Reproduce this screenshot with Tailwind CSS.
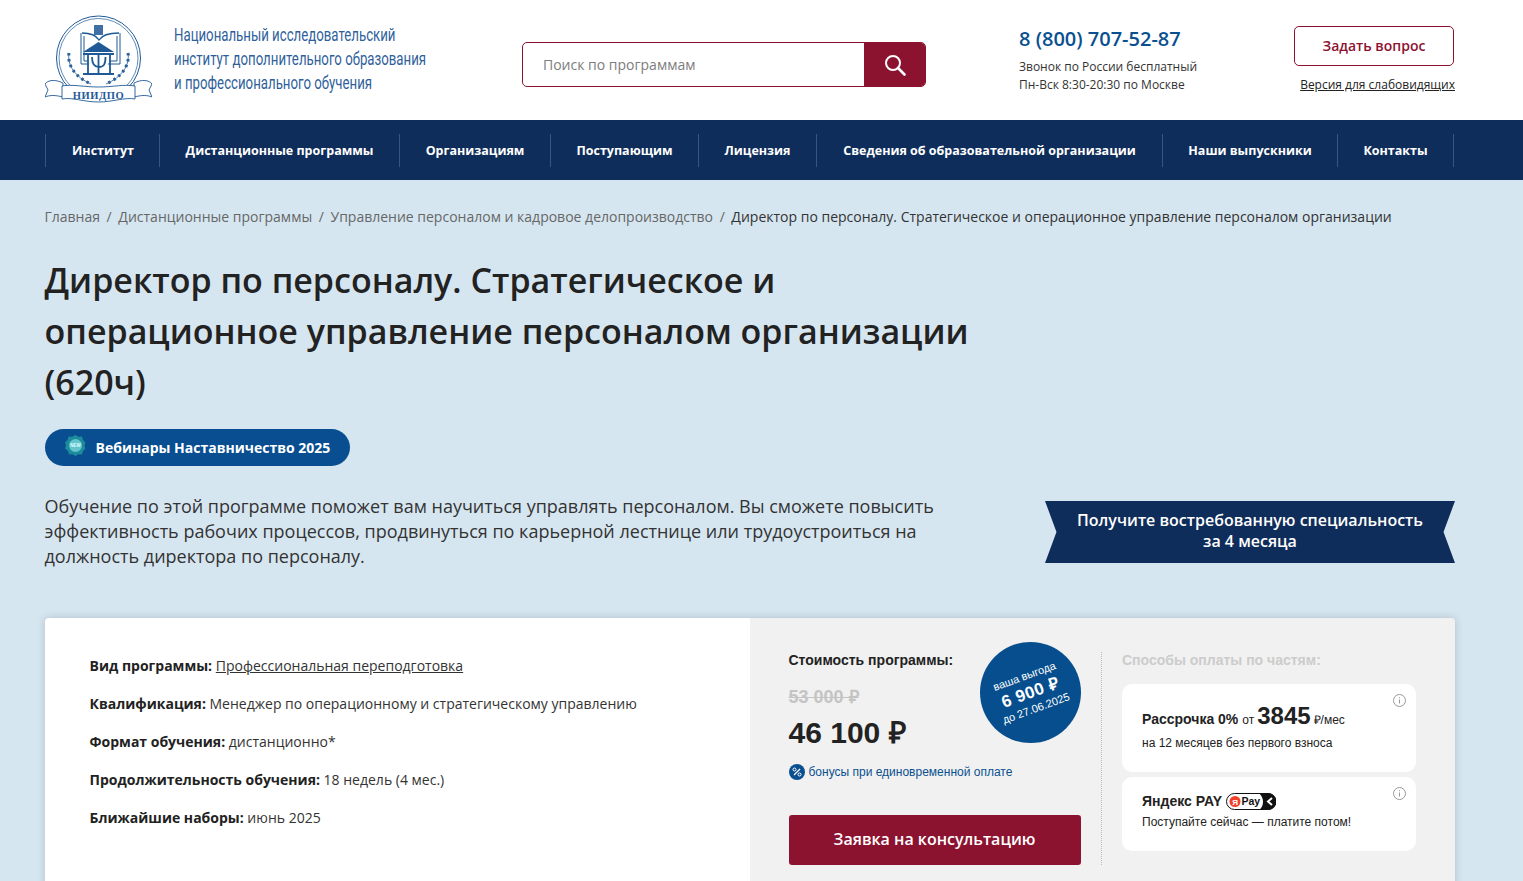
<!DOCTYPE html>
<html>
<head>
    <meta charset="utf-8">
    <title>НИИДПО</title>
    <script src="https://cdn.jsdelivr.net/npm/@tailwindcss/browser@4"></script>
</head>
<body class="bg-[#d6e6f1] text-[#222222] font-['Open_Sans',sans-serif] h-[881px] overflow-hidden">

    <!-- Header -->
    <header class="bg-white h-[120px] pl-[45px] flex items-start">
        <svg class="w-[107px] h-[90px] mt-[13px] shrink-0" viewBox="0 0 107 90" fill="none" stroke="#1f5a96">
            <circle cx="53.500" cy="45" r="42" stroke-width="1"/>
            <circle cx="53.500" cy="45" r="39.500" stroke-width="0.700"/>
            <!-- emblem, book, temple -->
            <rect x="49" y="12" width="9" height="10" fill="#3f6fa5" stroke="none"/>
            <path d="M36 20v31h8M75 20v31H63M39 23v25h4M72 23v25h-8" stroke-width="1"/>
            <path d="M37 20c8 0 14 2 17 7 3-5 10-7 20-7" stroke-width="1.400"/>
            <path d="M53.500 29 38 39h31z" fill="#1f5a96" stroke="none"/>
            <path d="M38 41h31M38 61h31" stroke-width="1.800"/>
            <path d="M43 41v20M65 41v20" stroke-width="1.800"/>
            <path d="M47 44c0 7 2 10 7 10s6.500-3 6.500-10M53.500 41v20" stroke-width="1.800"/>
            <!-- laurels -->
            <path d="M24 40c-2 12 6 24 22 31M83 40c2 12-6 24-22 31" stroke-width="0.800"/>
            <path d="M24 40c-2 12 6 24 22 31M83 40c2 12-6 24-22 31" stroke-width="3" stroke-dasharray="2.500 3.500" stroke="#2b6199"/>
            <!-- ribbon -->
            <path d="M18 70C10 66 3 67 0 71l3 6-3 7c5-2 10-2 18 0zM89 70c8-4 15-3 18 1l-3 6 3 7c-5-2-10-2-18 0z" fill="#fff" stroke-width="0.900"/>
            <path d="M17 73c10-2 22 1 36.500 1s26-3 36.500-1v13c-10-2-22 3-36.500 3S27 84 17 86z" fill="#fff" stroke-width="0.900"/>
            <text x="53.500" y="86" text-anchor="middle" fill="#1f5a96" stroke="none" font-family="Liberation Serif" font-size="10.500" font-weight="700" letter-spacing="0.600">НИИДПО</text>
        </svg>
        <div class="ml-[22px] mt-[23px] w-[320px] text-[18.500px] leading-[24px] text-[#2f5f9b] font-['Roboto',sans-serif] scale-x-[0.715] origin-left whitespace-nowrap">
            Национальный исследовательский<br>институт дополнительного образования<br>и профессионального обучения
        </div>
        <div class="ml-[28px] mt-[42px] w-[404px] h-[45px] flex border border-[#8c1330] rounded-[5px] overflow-hidden shrink-0">
            <div class="flex-1 pl-[20px] text-[14px] leading-[44px] text-[#7d7d7d]">Поиск по программам</div>
            <div class="w-[61px] bg-[#8c1330] flex items-center justify-center">
                <svg class="w-[22px] h-[22px]" viewBox="0 0 22 22" fill="none" stroke="#fff" stroke-width="2"><circle cx="9" cy="9" r="7"/><path d="m14 14 6.500 6.500" stroke-width="2.600" stroke-linecap="round"/></svg>
            </div>
        </div>
        <div class="ml-[93px] mt-[25px] w-[275px] shrink-0">
            <div class="text-[20px] leading-[28px] font-semibold text-[#0a5090]">8 (800) 707-52-87</div>
            <div class="mt-[5px] text-[12px] leading-[18px] text-[#333333]">Звонок по России бесплатный<br>Пн-Вск 8:30-20:30 по Москве</div>
        </div>
        <div class="mt-[26px] w-[160px] shrink-0">
            <div class="h-[40px] border border-[#8c1330] rounded-[5px] text-[14px] font-semibold leading-[38px] text-center text-[#8c1330]">Задать вопрос</div>
            <div class="mt-[10px] -mr-[1px] text-[12px] leading-[18px] text-right underline whitespace-nowrap">Версия для слабовидящих</div>
        </div>
    </header>

    <!-- Nav -->
    <nav class="bg-[#0f2d5a] h-[60px] pl-[45px] flex items-center text-white text-[12.500px] font-bold">
        <div class="w-[115px] h-[33px] flex items-center justify-center pt-[2px] pl-[1px] border-x border-[#3a5680]">Институт</div>
        <div class="w-[240px] h-[33px] flex items-center justify-center pt-[2px] border-r border-[#3a5680]">Дистанционные программы</div>
        <div class="w-[151px] h-[33px] flex items-center justify-center pt-[2px] border-r border-[#3a5680]">Организациям</div>
        <div class="w-[148px] h-[33px] flex items-center justify-center pt-[2px] border-r border-[#3a5680]">Поступающим</div>
        <div class="w-[118px] h-[33px] flex items-center justify-center pt-[2px] border-r border-[#3a5680]">Лицензия</div>
        <div class="w-[346px] h-[33px] flex items-center justify-center pt-[2px] border-r border-[#3a5680]">Сведения об образовательной организации</div>
        <div class="w-[175px] h-[33px] flex items-center justify-center pt-[2px] border-r border-[#3a5680]">Наши выпускники</div>
        <div class="w-[116px] h-[33px] flex items-center justify-center pt-[2px] border-r border-[#3a5680]">Контакты</div>
    </nav>

    <!-- Content -->
    <main class="pl-[44.500px] w-[1455px]">
        <div class="pt-[27px] text-[14px] leading-[20px] text-[#666666] whitespace-nowrap">
            Главная<span class="mx-[6.600px]">/</span>Дистанционные программы<span class="mx-[6.600px]">/</span>Управление персоналом и кадровое делопроизводство<span class="mx-[6.600px]">/</span><span class="text-[#333333]">Директор по персоналу. Стратегическое и операционное управление персоналом организации</span>
        </div>

        <h1 class="mt-[28px] w-[960px] text-[34px] leading-[51px] font-semibold text-[#222222]">Директор по персоналу. Стратегическое и операционное управление персоналом организации (620ч)</h1>

        <div class="mt-[21px] w-[305px] h-[37px] rounded-full bg-[#084e91] flex items-center pl-[20px] text-white text-[14px] font-bold">
            <svg class="w-[21px] h-[21px] -mt-[5px] shrink-0" viewBox="0 0 21 21"><path d="M10.500 0l3 1.800 3.500-.2 1 3.400 2.500 2.500-1 3 1 3-2.500 2.500-1 3.400-3.500-.2-3 1.800-3-1.800-3.500.2-1-3.400L0 13.500l1-3-1-3L2.500 5l1-3.400 3.500.2z" fill="#1c8c9c"/><circle cx="10.500" cy="10.500" r="6.500" fill="#63c4cc"/><text x="10.500" y="12" text-anchor="middle" font-family="Liberation Sans" font-size="4.500" font-weight="700" fill="#dff">NEW</text></svg>
            <span class="ml-[10px]">Вебинары Наставничество 2025</span>
        </div>

        <div class="mt-[28px] flex items-start justify-between">
            <p class="w-[920px] text-[18px] leading-[25px] text-[#333333]">Обучение по этой программе поможет вам научиться управлять персоналом. Вы сможете повысить эффективность рабочих процессов, продвинуться по карьерной лестнице или трудоустроиться на должность директора по персоналу.</p>
            <div class="mt-[7px] w-[410px] h-[62px] pb-[2px] bg-[#0f2d5a] [clip-path:polygon(0_0,100%_0,97.200%_50%,100%_100%,0_100%,2.800%_50%)] flex items-center justify-center text-center text-white text-[16px] leading-[21px] font-semibold">Получите востребованную специальность<br>за 4 месяца</div>
        </div>

        <!-- Program card -->
        <section class="mt-[49px] ml-[0.500px] w-[1410px] h-[300px] flex rounded-t-[4px] overflow-hidden shadow-[0_0_8px_rgba(0,0,0,0.18)]">
            <div class="w-[705px] bg-white pl-[44.500px] pt-[38px] text-[14px] leading-[20px] text-[#333333] flex flex-col gap-[18px]">
                <div><b class="text-[#222222]">Вид программы:</b> <span class="underline">Профессиональная переподготовка</span></div>
                <div><b class="text-[#222222]">Квалификация:</b> Менеджер по операционному и стратегическому управлению</div>
                <div><b class="text-[#222222]">Формат обучения:</b> дистанционно*</div>
                <div><b class="text-[#222222]">Продолжительность обучения:</b> 18 недель (4 мес.)</div>
                <div><b class="text-[#222222]">Ближайшие наборы:</b> июнь 2025</div>
            </div>
            <div class="w-[705px] bg-[#f1f1f1] flex font-['Liberation_Sans',sans-serif]">
                <div class="relative w-[351px] pl-[38.500px] pr-[20px] pt-[33px]">
                    <div class="text-[14px] leading-[18px] font-bold">Стоимость программы:</div>
                    <div class="mt-[17px] text-[18px] leading-[22px] font-bold text-[#c4c4c4] line-through">53 000 ₽</div>
                    <div class="mt-[5px] text-[30px] leading-[40px] font-bold">46 100 ₽</div>
                    <div class="mt-[11px] flex items-center text-[12px] leading-[16px] text-[#0a5090]">
                        <svg class="w-[16px] h-[16px] mr-[4px]" viewBox="0 0 16 16"><circle cx="8" cy="8" r="8" fill="#0a5090"/><path d="m5 11 6-6" stroke="#fff" stroke-width="1.200"/><circle cx="5.500" cy="5.500" r="1.500" fill="none" stroke="#fff"/><circle cx="10.500" cy="10.500" r="1.500" fill="none" stroke="#fff"/></svg>
                        бонусы при единовременной оплате
                    </div>
                    <div class="mt-[35px] w-[292px] h-[50px] pb-[2px] bg-[#8c1330] rounded-[3px] flex items-center justify-center text-white text-[16px] font-semibold font-['Open_Sans',sans-serif]">Заявка на консультацию</div>
                    <!-- Discount badge -->
                    <div class="absolute left-[230px] top-[24px] w-[101px] h-[101px] rounded-full bg-[#064e8d] flex items-center justify-center">
                        <div class="-rotate-[20deg] text-center text-white text-[11px] leading-[15px] whitespace-nowrap">
                            <div>ваша выгода</div>
                            <div class="text-[17px] leading-[19px] font-bold tracking-[0.400px]">6 900 ₽</div>
                            <div>до 27.06.2025</div>
                        </div>
                    </div>
                </div>
                <div class="w-0 h-[213px] mt-[34px] border-l border-dotted border-[#bbbbbb]"></div>
                <div class="pl-[20px] pt-[33px] w-[314px]">
                    <div class="text-[14px] leading-[18px] font-bold text-[#cccccc]">Способы оплаты по частям:</div>
                    <div class="relative mt-[15px] h-[88px] w-[294px] bg-white rounded-[10px] pl-[20px] pt-[16px] text-[#222222]">
                        <div class="flex items-baseline text-[14px] leading-[32px] whitespace-nowrap"><b>Рассрочка 0%</b><span class="ml-[4px] text-[12px]">от</span><b class="ml-[3px] text-[24px]">3845</b><span class="ml-[3px] text-[12px]">₽/мес</span></div>
                        <div class="text-[12px] leading-[16px] -mt-[1px]">на 12 месяцев без первого взноса</div>
                        <svg class="absolute right-[10px] top-[10px] w-[13px] h-[13px]" viewBox="0 0 13 13" fill="none" stroke="#999999"><circle cx="6.500" cy="6.500" r="6"/><path d="M6.500 5.500v4M6.500 3.200v1"/></svg>
                    </div>
                    <div class="relative mt-[5px] h-[74px] w-[294px] bg-white rounded-[10px] pl-[20px] pt-[15px] text-[#222222]">
                        <div class="flex items-center text-[14px] leading-[18px] font-bold">Яндекс PAY
                            <svg class="ml-[4px] w-[50px] h-[17px]" viewBox="0 0 50 17"><rect x="0.500" y="0.500" width="49" height="16" rx="8" fill="#fff" stroke="#111"/><path d="M36 0h6a8.500 8.500 0 0 1 0 17h-9c3-2 4-5 4-8.500S35 2 33 0z" fill="#111"/><circle cx="9" cy="8.500" r="5.500" fill="#f0412a"/><text x="9" y="11.500" text-anchor="middle" font-family="Liberation Sans" font-size="8" font-weight="700" fill="#fff">Я</text><text x="15.500" y="12" font-family="Liberation Sans" font-size="10.500" font-weight="700" fill="#111">Pay</text><path d="M46 5l-4 3.500 4 3.500" stroke="#fff" stroke-width="2" fill="none"/></svg>
                        </div>
                        <div class="text-[12px] leading-[16px] mt-[4px]">Поступайте сейчас — платите потом!</div>
                        <svg class="absolute right-[10px] top-[10px] w-[13px] h-[13px]" viewBox="0 0 13 13" fill="none" stroke="#999999"><circle cx="6.500" cy="6.500" r="6"/><path d="M6.500 5.500v4M6.500 3.200v1"/></svg>
                    </div>
                </div>
            </div>
        </section>
    </main>
</body>
</html>
